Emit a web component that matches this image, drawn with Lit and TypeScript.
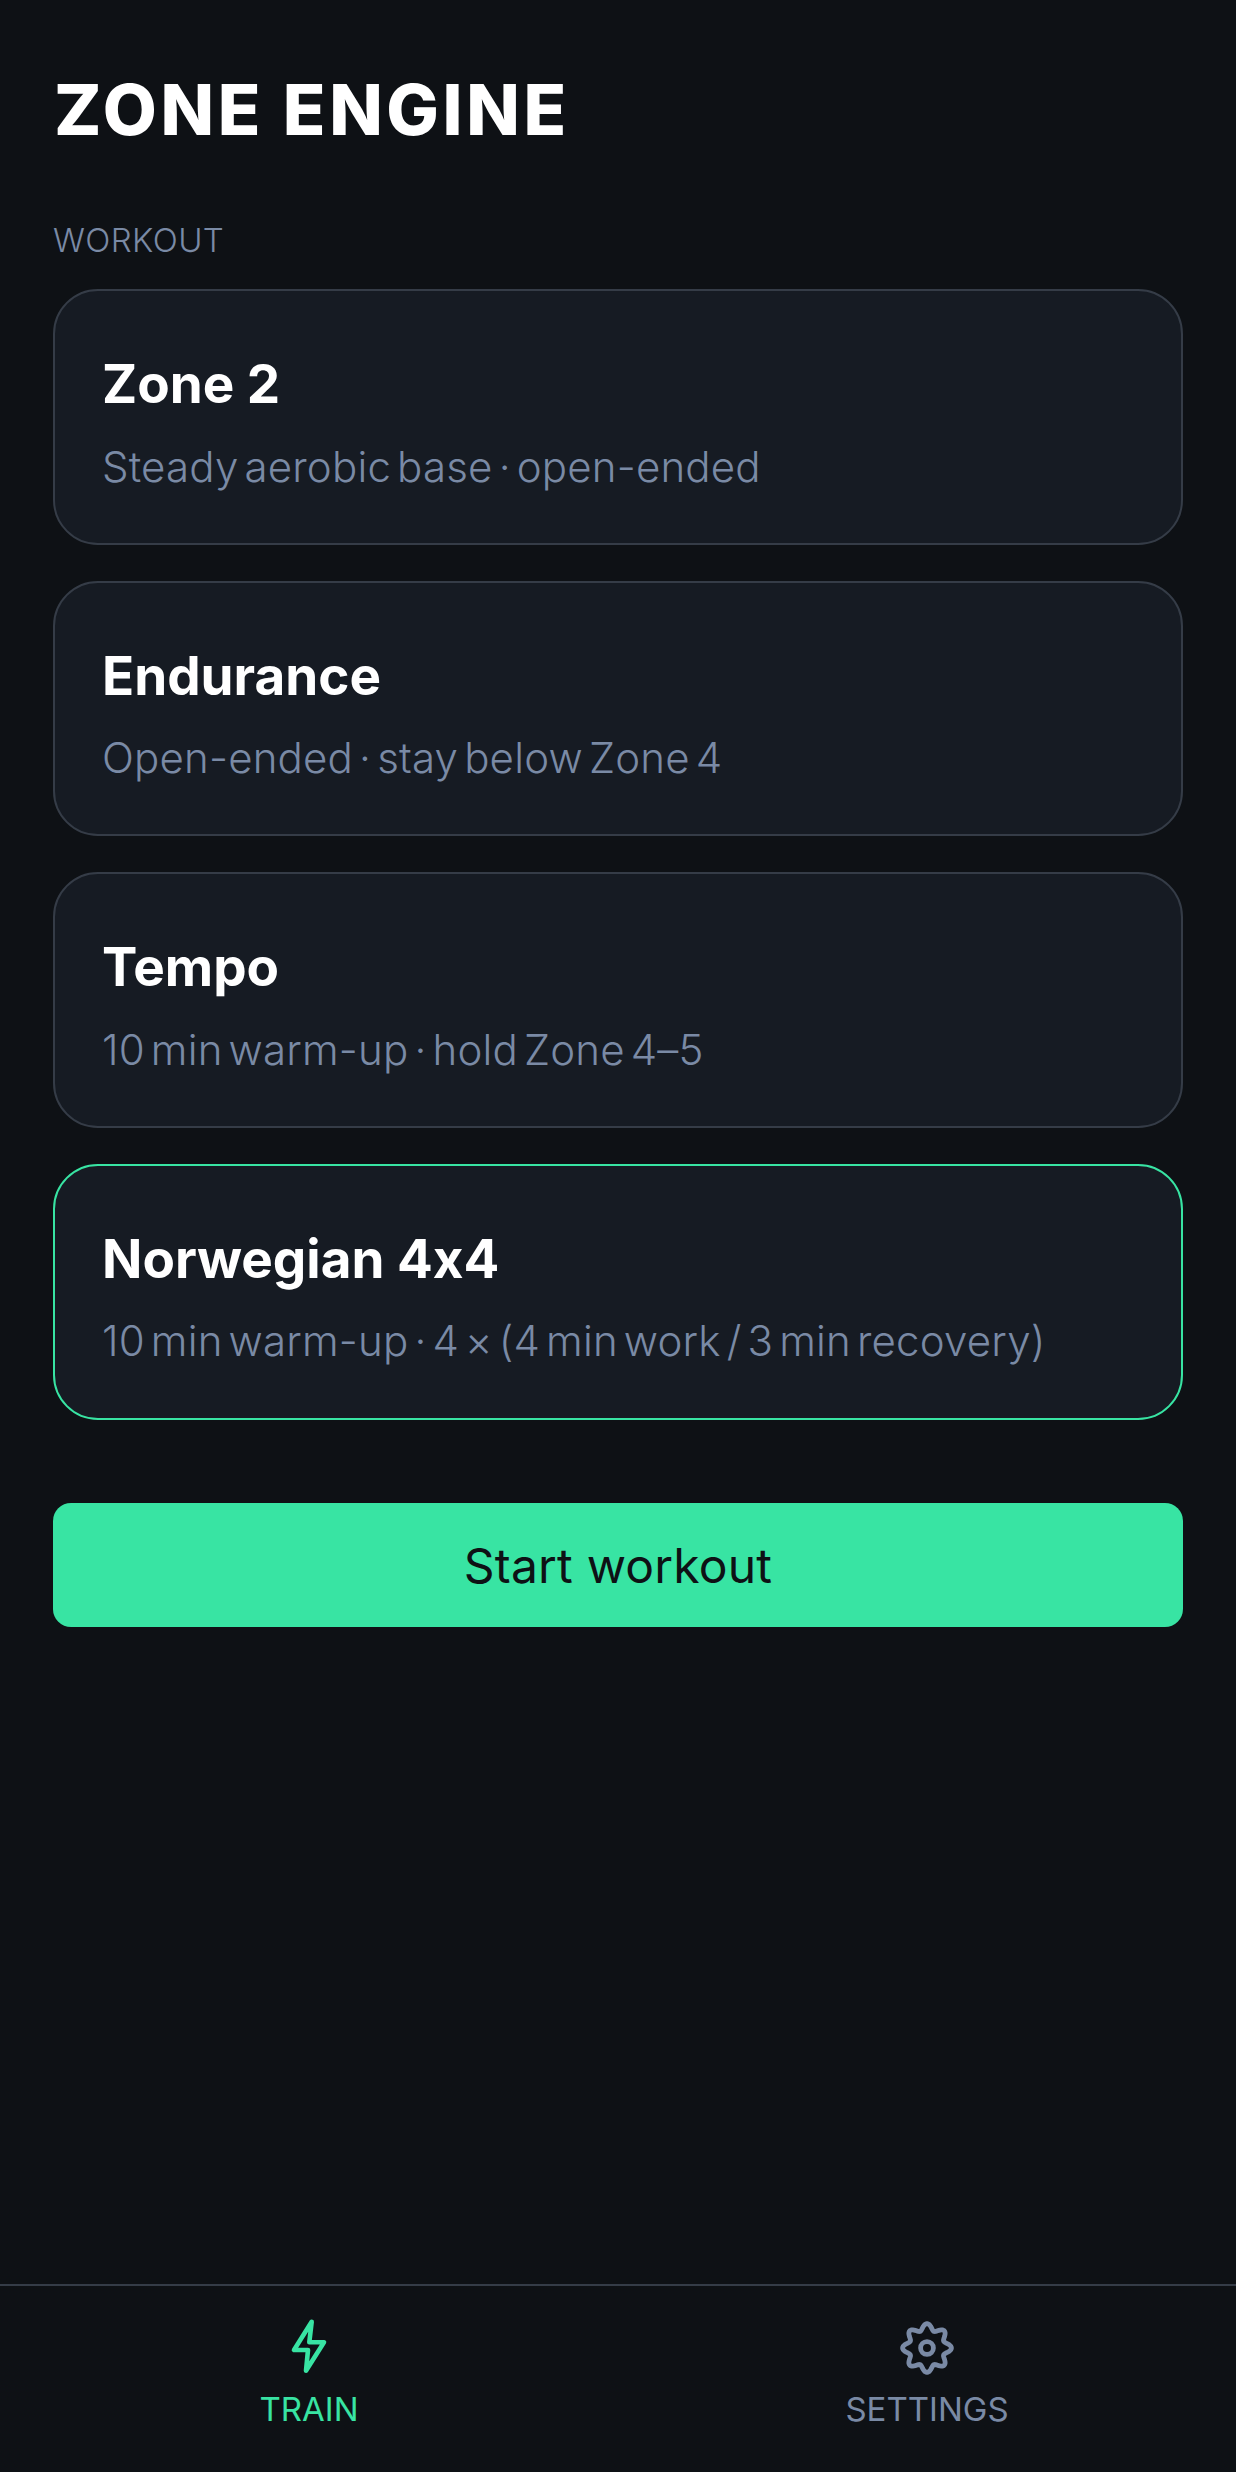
import { LitElement, html, css, svg } from 'lit';
import { customElement, state } from 'lit/decorators.js';

interface Workout {
    name: string;
    detail: string;
}

const WORKOUTS: Workout[] = [
    { name: 'Zone 2', detail: 'Steady aerobic base · open-ended' },
    { name: 'Endurance', detail: 'Open-ended · stay below Zone 4' },
    { name: 'Tempo', detail: '10 min warm-up · hold Zone 4–5' },
    { name: 'Norwegian 4x4', detail: '10 min warm-up · 4 × (4 min work / 3 min recovery)' },
];

// eight rounded lobes, no stock icon has this outline
function gearPath(cx: number, cy: number, r: number, wave: number): string {
    const pts: string[] = [];
    for (let i = 0; i < 160; i++) {
        const t = (i / 160) * Math.PI * 2;
        const rad = r + wave * Math.cos(t * 8);
        pts.push(`${(cx + rad * Math.sin(t)).toFixed(2)} ${(cy - rad * Math.cos(t)).toFixed(2)}`);
    }
    return `M${pts.join('L')}Z`;
}

@customElement('app-root')
export class AppRoot extends LitElement {
    static override styles = css`
        :host {
            display: flex;
            flex-direction: column;
            height: 2472px;
            background: #0e1115;
            font-family: Inter, 'Noto Sans', sans-serif;
            font-feature-settings: 'calt' 0;
            color: #fff;
        }
        main {
            flex: 1;
            padding: 66px 53px 0;
        }
        h1 {
            margin: 0;
            padding-left: 1px;
            font-size: 70px;
            line-height: 88px;
            font-weight: 800;
            letter-spacing: 3.6px;
        }
        .label {
            margin-top: 66px;
            font-size: 33px;
            line-height: 40px;
            font-weight: 300;
            color: #7a8aa5;
            letter-spacing: 0.4px;
        }
        .list {
            display: flex;
            flex-direction: column;
            gap: 36px;
            margin-top: 29px;
        }
        .card {
            box-sizing: border-box;
            height: 255.67px;
            padding: 57px 47px 0;
            border: 2px solid #353c47;
            border-radius: 45px;
            background: #161b23;
        }
        .card.selected {
            border-color: #38e4a3;
        }
        .name {
            font-size: 53px;
            line-height: 72px;
            font-weight: 700;
        }
        .detail {
            margin-top: 16.5px;
            font-size: 42px;
            line-height: 60px;
            font-weight: 300;
            color: #7a8aa5;
            letter-spacing: 0.19px;
            word-spacing: -6px;
        }
        .start {
            display: block;
            width: 100%;
            height: 124px;
            margin-top: 83.33px;
            padding: 2px 0 0;
            border: 0;
            border-radius: 18px;
            background: #38e4a3;
            color: #0e1115;
            font-family: inherit;
            font-feature-settings: inherit;
            font-size: 48px;
            font-weight: 400;
            letter-spacing: 0.2px;
        }
        nav {
            display: grid;
            grid-template-columns: 1fr 1fr;
            height: 188px;
            box-sizing: border-box;
            border-top: 2px solid #353c47;
        }
        .tab {
            display: flex;
            flex-direction: column;
            align-items: center;
            padding-top: 32px;
            color: #7a8aa5;
            font-size: 33px;
            line-height: 40px;
            font-weight: 400;
        }
        .tab.active {
            color: #38e4a3;
        }
        .tab svg {
            display: block;
            width: 60px;
            height: 60px;
            margin-bottom: 11px;
        }
    `;

    @state() selected = 3;

    private boltIcon() {
        return html`<svg viewBox="0 0 60 60" fill="none" stroke="currentColor" stroke-width="4.6" stroke-linecap="round" stroke-linejoin="round">
            ${svg`<path d="M32.7 3.7 15 32H29L27 52.7 45 24.3H30.3Z"></path>`}
        </svg>`;
    }

    private gearIcon() {
        return html`<svg viewBox="0 0 60 60" fill="none" stroke="currentColor" stroke-width="4.8" stroke-linejoin="round">
            ${svg`<path d=${gearPath(30, 30, 21.2, 3.2)}></path><circle cx="30" cy="30" r="6.4"></circle>`}
        </svg>`;
    }

    override render() {
        return html`
            <main>
                <h1>ZONE ENGINE</h1>
                <div class="label">WORKOUT</div>
                <div class="list">
                    ${WORKOUTS.map(
                        (w, i) => html`
                            <div class="card ${i === this.selected ? 'selected' : ''}">
                                <div class="name">${w.name}</div>
                                <div class="detail">${w.detail}</div>
                            </div>
                        `
                    )}
                </div>
                <button class="start">Start workout</button>
            </main>
            <nav>
                <div class="tab active">${this.boltIcon()}<span>TRAIN</span></div>
                <div class="tab">${this.gearIcon()}<span>SETTINGS</span></div>
            </nav>
        `;
    }
}
